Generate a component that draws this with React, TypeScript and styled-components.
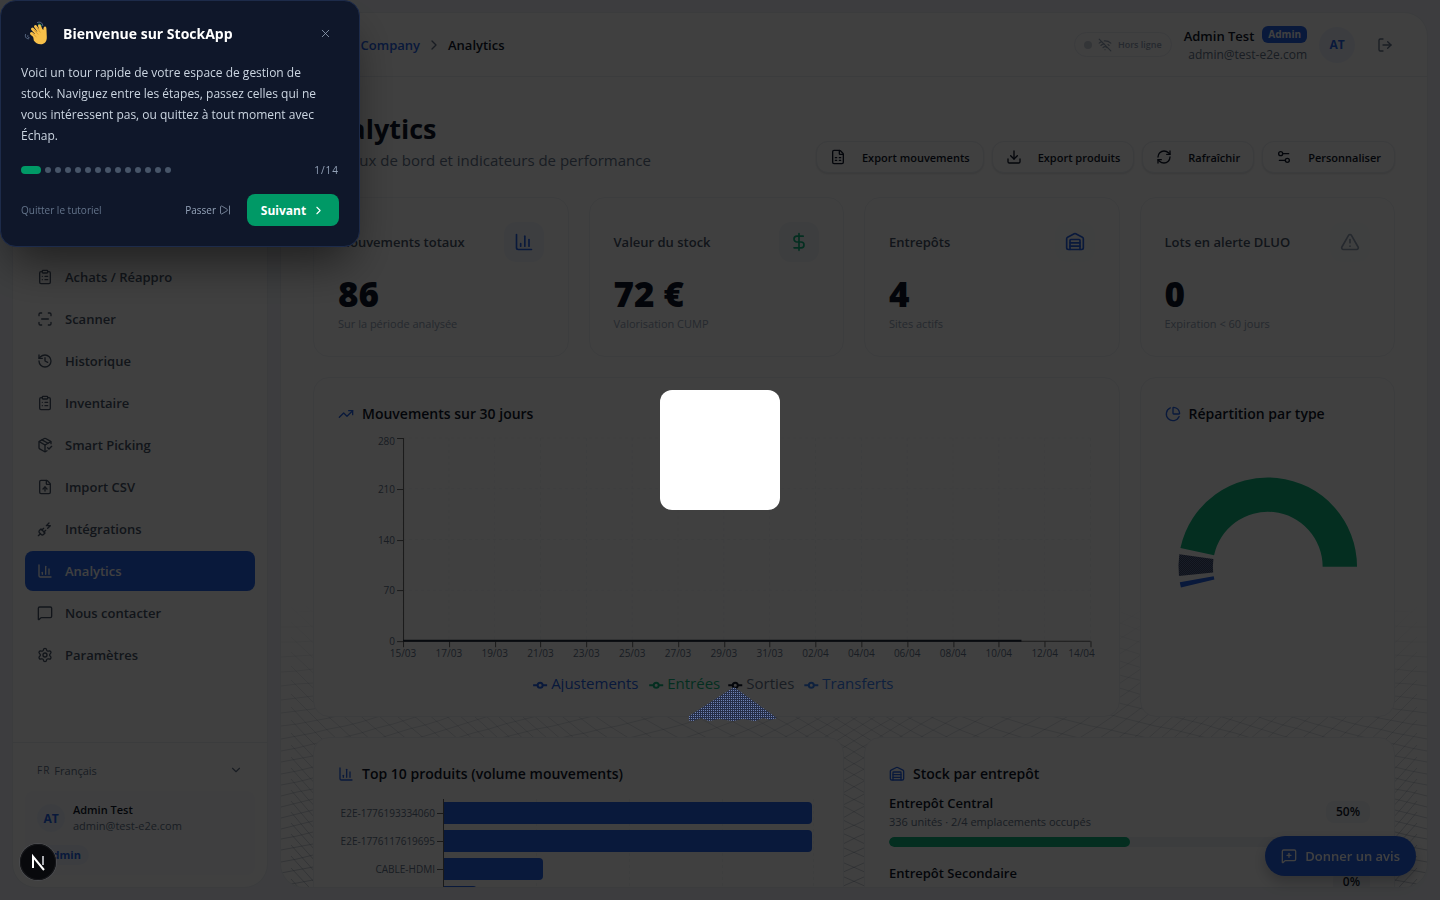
import React from "react";
import styled, { createGlobalStyle } from "styled-components";
import {
  ChartColumn, ChartPie, ChevronDown, ChevronRight, ClipboardList, DollarSign, Download,
  FileSpreadsheet, FileUp, History, LogOut, MessageSquare, MessageSquarePlus, PackageCheck,
  PlugZap, RefreshCw, ScanLine, Settings, Settings2, SkipForward, TrendingUp, TriangleAlert,
  Warehouse, WifiOff, X,
} from "lucide-react";

const color = {
  page: "#f1f4f9",
  surface: "#ffffff",
  line: "#e9edf3",
  ink: "#0f172a",
  body: "#475569",
  muted: "#64748b",
  faint: "#94a3b8",
  blue: "#2563eb",
  green: "#10b981",
};

const GlobalStyle = createGlobalStyle`
  *, *::before, *::after { box-sizing: border-box; }
  body {
    margin: 0;
    background: ${color.page};
    color: ${color.ink};
    font-family: "Segoe UI", "Open Sans", "Noto Sans", sans-serif;
    font-size: 13px;
  }
  button, select { font: inherit; color: inherit; }
  h1, h2, p, ul { margin: 0; padding: 0; }
`;

const Shell = styled.div`
  display: flex;
  gap: 12px;
  height: 100vh;
  padding: 12px;
`;

/* Sidebar */

const Sidebar = styled.aside`
  display: flex;
  flex-direction: column;
  flex: 0 0 256px;
  background: ${color.surface};
  border: 1px solid ${color.line};
  border-radius: 24px;
  overflow: hidden;
`;

const NavList = styled.ul`
  flex: 1;
  display: flex;
  flex-direction: column;
  justify-content: flex-end;
  gap: 2px;
  padding: 0 12px 67px;
  list-style: none;
`;

const NavLink = styled.a<{ $active?: boolean }>`
  display: flex;
  align-items: center;
  gap: 12px;
  height: 40px;
  padding: 0 12px;
  border-radius: 8px;
  font-weight: 600;
  text-decoration: none;
  color: ${(p) => (p.$active ? "#ffffff" : color.body)};
  background: ${(p) => (p.$active ? color.blue : "transparent")};
  svg { width: 16px; height: 16px; }
`;

const SidebarFooter = styled.div`
  padding: 6px 12px 12px;
  border-top: 1px solid ${color.line};
`;

const LanguagePicker = styled.label`
  display: flex;
  align-items: center;
  gap: 4px;
  height: 42px;
  padding: 0 12px;
  font-size: 12px;
  font-weight: 500;
  color: ${color.muted};
  select {
    flex: 1;
    appearance: none;
    border: 0;
    padding: 0;
    background: none;
    font-size: 11px;
  }
  svg { width: 14px; height: 14px; }
`;

const LanguageCode = styled.span`
  font-size: 10px;
  letter-spacing: 1px;
`;

const UserCard = styled.div`
  display: flex;
  flex-direction: column;
  gap: 11px;
  height: 84px;
  padding: 11px 12px;
  border-radius: 8px;
  background: #fbfcfe;
`;

const UserRow = styled.div`
  display: flex;
  align-items: center;
  gap: 8px;
`;

const Avatar = styled.span<{ $size: number }>`
  display: grid;
  place-items: center;
  width: ${(p) => p.$size}px;
  height: ${(p) => p.$size}px;
  border-radius: 50%;
  background: #eff4fd;
  color: ${color.blue};
  font-size: 12px;
  font-weight: 700;
`;

const UserText = styled.div<{ $end?: boolean }>`
  display: flex;
  flex-direction: column;
  align-items: ${(p) => (p.$end ? "flex-end" : "flex-start")};
  font-size: ${(p) => (p.$end ? 13 : 11)}px;
  line-height: ${(p) => (p.$end ? 20 : 16)}px;
  font-weight: 600;
  color: ${color.ink};
  small {
    font-size: ${(p) => (p.$end ? 12 : 11)}px;
    line-height: ${(p) => (p.$end ? 18 : 16)}px;
    font-weight: 400;
    color: ${color.muted};
  }
`;

const NameLine = styled.span`
  display: flex;
  align-items: center;
  gap: 8px;
`;

const RoleBadge = styled.span<{ $solid?: boolean }>`
  align-self: flex-start;
  padding: 0 ${(p) => (p.$solid ? 6 : 8)}px;
  border-radius: ${(p) => (p.$solid ? 6 : 10)}px;
  font-size: ${(p) => (p.$solid ? 10 : 11)}px;
  font-weight: 700;
  line-height: ${(p) => (p.$solid ? 17 : 20)}px;
  color: ${(p) => (p.$solid ? "#ffffff" : color.blue)};
  background: ${(p) => (p.$solid ? color.blue : "#eff4fd")};
`;

/* Main panel */

const Main = styled.main`
  position: relative;
  flex: 1;
  min-width: 0;
  display: flex;
  flex-direction: column;
  background: ${color.surface};
  border: 1px solid ${color.line};
  border-radius: 24px;
  overflow: hidden;
`;

const MeshLayer = styled.svg`
  position: absolute;
  left: 0;
  bottom: 0;
  width: 100%;
  height: 290px;
`;

const TopBar = styled.header`
  position: relative;
  display: flex;
  align-items: center;
  justify-content: space-between;
  flex: 0 0 64px;
  padding: 0 32px;
  border-bottom: 1px solid ${color.line};
`;

const Breadcrumb = styled.nav`
  display: flex;
  align-items: center;
  gap: 6px;
  font-weight: 600;
  a {
    width: 107px;
    text-align: right;
    white-space: nowrap;
    color: ${color.blue};
    text-decoration: none;
  }
  svg { width: 16px; height: 16px; color: ${color.muted}; }
`;

const TopActions = styled.div`
  display: flex;
  align-items: center;
  gap: 12px;
`;

const StatusPill = styled.span`
  display: flex;
  align-items: center;
  gap: 6px;
  height: 25px;
  padding: 0 9px;
  border: 1px solid ${color.line};
  border-radius: 13px;
  font-size: 9px;
  font-weight: 600;
  color: ${color.faint};
  svg { width: 14px; height: 14px; }
`;

const StatusDot = styled.i`
  width: 8px;
  height: 8px;
  border-radius: 50%;
  background: #cbd2dc;
`;

const IconButton = styled.button`
  display: grid;
  place-items: center;
  width: 36px;
  height: 36px;
  margin-right: -8px;
  padding: 0;
  border: 0;
  background: none;
  color: ${color.muted};
  svg { width: 16px; height: 16px; }
`;

const Content = styled.div`
  position: relative;
  flex: 1;
  min-height: 0;
  padding: 32px;
  overflow: hidden;
`;

const PageHead = styled.div`
  display: flex;
  align-items: flex-end;
  justify-content: space-between;
  margin-bottom: 24px;
`;

const PageTitle = styled.h1`
  font-size: 27px;
  line-height: 39px;
  font-weight: 700;
`;

const PageSubtitle = styled.p`
  font-size: 15px;
  line-height: 25px;
  color: ${color.muted};
`;

const Toolbar = styled.div`
  display: flex;
  gap: 8px;
`;

const ToolButton = styled.button`
  display: flex;
  align-items: center;
  gap: 16px;
  height: 32px;
  padding: 0 13px;
  border: 1px solid ${color.line};
  border-radius: 12px;
  background: ${color.surface};
  box-shadow: 0 1px 2px rgba(15, 23, 42, 0.12);
  font-size: 11px;
  font-weight: 600;
  white-space: nowrap;
  svg { width: 16px; height: 16px; }
`;

const Grid = styled.div`
  display: grid;
  grid-template-columns: repeat(4, minmax(0, 1fr));
  gap: 20px;
`;

const Card = styled.section<{ $span?: number; $height?: number }>`
  grid-column: span ${(p) => p.$span ?? 1};
  min-height: ${(p) => p.$height ?? 0}px;
  padding: 24px;
  border: 1px solid #eff2f6;
  border-radius: 16px;
  background: ${color.surface};
`;

const StatHead = styled.div`
  display: flex;
  align-items: center;
  justify-content: space-between;
  margin-bottom: 12px;
  font-weight: 600;
  color: ${color.body};
`;

const StatIcon = styled.span<{ $tint: string; $back: string }>`
  display: grid;
  place-items: center;
  width: 40px;
  height: 40px;
  border-radius: 12px;
  color: ${(p) => p.$tint};
  background: ${(p) => p.$back};
  svg { width: 20px; height: 20px; }
`;

const StatValue = styled.p`
  margin-bottom: 2px;
  font-size: 35px;
  line-height: 40px;
  font-weight: 800;
`;

const StatNote = styled.p`
  font-size: 11px;
  line-height: 16px;
  color: ${color.faint};
`;

const CardTitle = styled.h2`
  display: flex;
  align-items: center;
  gap: 8px;
  margin-bottom: 1px;
  font-size: 14px;
  line-height: 24px;
  font-weight: 600;
  svg { width: 16px; height: 16px; color: ${color.blue}; }
`;

const Chart = styled.svg`
  display: block;
  width: 100%;
  text { font-size: 10px; fill: ${color.muted}; }
  text.legend { font-size: 15px; }
`;

const StockList = styled.ul`
  display: grid;
  gap: 16px;
  margin-top: 7px;
  list-style: none;
`;

const StockRow = styled.div`
  display: flex;
  align-items: center;
  justify-content: space-between;
  margin-bottom: 6px;
  strong { display: block; line-height: 20px; font-weight: 600; }
  small { display: block; min-height: 18px; font-size: 11px; line-height: 18px; color: ${color.muted}; }
`;

const Percent = styled.span`
  padding: 0 10px;
  border-radius: 8px;
  background: #f3f5f9;
  font-size: 12px;
  font-weight: 600;
  line-height: 22px;
`;

const Track = styled.div`
  height: 10px;
  border-radius: 5px;
  background: #eef2f7;
  overflow: hidden;
`;

const Fill = styled.div`
  height: 100%;
  border-radius: 5px;
  background: ${color.green};
`;

const FeedbackButton = styled.button`
  position: fixed;
  right: 24px;
  bottom: 24px;
  display: flex;
  align-items: center;
  gap: 8px;
  height: 40px;
  padding: 0 16px;
  border: 0;
  border-radius: 20px;
  background: ${color.blue};
  color: #ffffff;
  font-weight: 600;
  box-shadow: 0 6px 14px rgba(15, 23, 42, 0.25);
  svg { width: 16px; height: 16px; }
`;

/* Tour */

const Spotlight = styled.div`
  position: fixed;
  top: 50%;
  left: 50%;
  width: 120px;
  height: 120px;
  margin: -60px 0 0 -60px;
  border-radius: 12px;
  background: #ffffff;
  box-shadow: 0 0 0 9999px rgba(0, 0, 0, 0.75);
`;

const PeakLayer = styled.svg`
  position: fixed;
  left: calc(50% - 31px);
  top: 686px;
  width: 90px;
  height: 36px;
`;

const TourCard = styled.div`
  position: fixed;
  top: 0;
  left: 0;
  width: 360px;
  padding: 20px;
  border: 1px solid #1d2b4a;
  border-radius: 16px;
  background: #0f172a;
  color: #cbd5e1;
  box-shadow: 0 24px 48px -10px rgba(0, 0, 0, 0.55);
`;

const TourHead = styled.div`
  display: flex;
  align-items: center;
  gap: 10px;
  height: 24px;
  margin-bottom: 17px;
  h2 { flex: 1; font-size: 14px; font-weight: 700; color: #ffffff; }
  > svg { width: 32px; height: 32px; }
`;

const CloseButton = styled.button`
  display: grid;
  place-items: center;
  width: 28px;
  height: 28px;
  padding: 0;
  border: 0;
  background: none;
  color: ${color.faint};
  svg { width: 13px; height: 13px; }
`;

const TourText = styled.p`
  padding-right: 12px;
  line-height: 21px;
  font-size: 12px;
  font-weight: 500;
`;

const Steps = styled.div`
  display: flex;
  align-items: center;
  gap: 4px;
  height: 16px;
  margin: 16px 0;
  font-size: 10px;
  color: ${color.faint};
  span { margin-left: auto; letter-spacing: 1px; }
`;

const Step = styled.i<{ $current?: boolean }>`
  width: ${(p) => (p.$current ? 20 : 6)}px;
  height: ${(p) => (p.$current ? 8 : 6)}px;
  border-radius: 4px;
  background: ${(p) => (p.$current ? "#009966" : "#475569")};
`;

const TourActions = styled.div`
  display: flex;
  align-items: center;
  gap: 16px;
`;

const TextButton = styled.button<{ $quiet?: boolean }>`
  display: flex;
  align-items: center;
  gap: 3px;
  padding: 0;
  border: 0;
  background: none;
  font-size: 10px;
  color: ${(p) => (p.$quiet ? color.muted : color.faint)};
  margin-right: ${(p) => (p.$quiet ? "auto" : "0")};
  svg { width: 12px; height: 12px; }
`;

const NextButton = styled.button`
  display: flex;
  align-items: center;
  justify-content: center;
  gap: 6px;
  width: 92px;
  height: 32px;
  padding: 0;
  border: 0;
  border-radius: 8px;
  background: #009966;
  color: #ffffff;
  font-size: 12px;
  font-weight: 700;
  svg { width: 13px; height: 13px; }
`;

const DevBadge = styled.button`
  position: fixed;
  left: 20px;
  bottom: 20px;
  width: 36px;
  height: 36px;
  padding: 0;
  border: 0;
  border-radius: 50%;
  background: #08090c;
  box-shadow: 0 0 0 1px #4a4b4e, inset 0 0 0 1px #16171a;
  svg { display: block; width: 36px; height: 36px; }
`;

const navItems = [
  { label: "Achats / Réappro", icon: ClipboardList },
  { label: "Scanner", icon: ScanLine },
  { label: "Historique", icon: History },
  { label: "Inventaire", icon: ClipboardList },
  { label: "Smart Picking", icon: PackageCheck },
  { label: "Import CSV", icon: FileUp },
  { label: "Intégrations", icon: PlugZap },
  { label: "Analytics", icon: ChartColumn, active: true },
  { label: "Nous contacter", icon: MessageSquare },
  { label: "Paramètres", icon: Settings },
];

const tools = [
  { label: "Export mouvements", icon: FileSpreadsheet },
  { label: "Export produits", icon: Download },
  { label: "Rafraîchir", icon: RefreshCw },
  { label: "Personnaliser", icon: Settings2 },
];

const stats = [
  { label: "Mouvements totaux", value: "86", note: "Sur la période analysée", icon: ChartColumn, tint: color.blue, back: "#f3f7fe" },
  { label: "Valeur du stock", value: "72 €", note: "Valorisation CUMP", icon: DollarSign, tint: color.green, back: "#f1f6f9" },
  { label: "Entrepôts", value: "4", note: "Sites actifs", icon: Warehouse, tint: color.blue, back: "#fcfdfe" },
  { label: "Lots en alerte DLUO", value: "0", note: "Expiration < 60 jours", icon: TriangleAlert, tint: color.faint, back: "#fcfdfe" },
];

const days = ["15/03", "17/03", "19/03", "21/03", "23/03", "25/03", "27/03", "29/03", "31/03", "02/04", "04/04", "06/04", "08/04", "10/04", "12/04", "14/04"];
const levels = [280, 210, 140, 70, 0];
const series = [
  { label: "Ajustements", x: 195, tint: "#2563eb", text: "#2563eb" },
  { label: "Entrées", x: 311, tint: "#10b981", text: "#10b981" },
  { label: "Sorties", x: 390, tint: "#0f172a", text: "#64748b" },
  { label: "Transferts", x: 466, tint: "#3b82f6", text: "#3b82f6" },
];
const products = [
  { label: "E2E-1776193334060", width: 369 },
  { label: "E2E-1776117619695", width: 369 },
  { label: "CABLE-HDMI", width: 100 },
  { label: "", width: 34 },
];
const warehouses = [
  { label: "Entrepôt Central", note: "336 unités · 2/4 emplacements occupés", percent: 50 },
  { label: "Entrepôt Secondaire", note: "", percent: 0 },
];

/* Two mirrored families of curves that cross into a net behind the cards. */
function Mesh() {
  const width = 1146;
  const start = 0.12;
  const bend = 0.7 / width;
  const rise = (x: number) => (Math.log(Math.cos(start)) - Math.log(Math.cos(start + bend * x))) / bend;
  const lines: string[] = [];
  for (let y0 = 0; y0 < 960; y0 += 13) {
    let left = "";
    let right = "";
    for (let x = 0; x <= width; x += 16) {
      const wave = 12 * Math.sin(x / 110 + y0 / 70);
      const y = Math.round(y0 - rise(x) + wave);
      if (y < -20 || y > 310) continue;
      left += `${left ? "L" : "M"}${x} ${y}`;
      right += `${right ? "L" : "M"}${width - x} ${y}`;
    }
    if (left) lines.push(left, right);
  }
  return (
    <MeshLayer viewBox={`0 0 ${width} 290`} preserveAspectRatio="none" aria-hidden="true">
      <defs>
        <linearGradient id="meshFade" gradientUnits="userSpaceOnUse" x1="0" y1="0" x2="0" y2="290">
          <stop offset="0" stopColor="#64748b" stopOpacity="0" />
          <stop offset="0.3" stopColor="#64748b" stopOpacity="0.16" />
          <stop offset="1" stopColor="#64748b" stopOpacity="0.36" />
        </linearGradient>
      </defs>
      <g fill="none" stroke="url(#meshFade)">
        {lines.map((d, i) => <path key={i} d={d} />)}
      </g>
    </MeshLayer>
  );
}

function MovementChart() {
  const step = 45.8;
  return (
    <Chart viewBox="0 0 756 265" role="img" aria-label="Mouvements sur 30 jours">
      <g stroke="#f3f5f8" strokeDasharray="3 3">
        {levels.map((v, i) => <path key={v} d={`M65 ${11 + i * 50.75}H752`} />)}
        {days.map((d, i) => <path key={d} d={`M${65 + i * step} 11V214`} />)}
      </g>
      <g stroke="#666666" fill="none">
        <path d="M65.5 11V214M65 214H752" />
        {levels.map((v, i) => <path key={v} d={`M59 ${Math.round(11 + i * 50.75) + 0.5}h6`} />)}
        {days.map((d, i) => <path key={d} d={`M${Math.round(65 + i * step) + 0.5} 214v6`} />)}
      </g>
      <path d="M65 213.5H683" stroke="#1e293b" strokeWidth="2" />
      {levels.map((v, i) => (
        <text key={v} x="57" y={i === 0 ? 18 : 15 + i * 50.75} textAnchor="end">{v}</text>
      ))}
      {days.map((d, i) => (
        <text key={d} x={i === 15 ? 743 : 65 + i * step} y="230" textAnchor="middle">{d}</text>
      ))}
      {series.map((s) => (
        <g key={s.label}>
          <path d={`M${s.x} 258h4.500M${s.x + 9.5} 258h4.500`} stroke={s.tint} strokeWidth="2" />
          <circle cx={s.x + 7} cy="258" r="2.500" fill="none" stroke={s.tint} strokeWidth="2" />
          <text className="legend" x={s.x + 18} y="262" style={{ fill: s.text }}>{s.label}</text>
        </g>
      ))}
    </Chart>
  );
}

function arc(from: number, to: number) {
  const at = (deg: number, r: number) => {
    const a = (deg * Math.PI) / 180;
    return `${(103 + r * Math.cos(a)).toFixed(2)} ${(140 - r * Math.sin(a)).toFixed(2)}`;
  };
  return `M${at(from, 89.5)}A89.5 89.5 0 0 0 ${at(to, 89.5)}L${at(to, 55)}A55 55 0 0 1 ${at(from, 55)}Z`;
}

function TypeChart() {
  return (
    <Chart viewBox="0 0 206 265" role="img" aria-label="Répartition par type">
      <defs>
        <pattern id="weave" width="2" height="2" patternUnits="userSpaceOnUse">
          <rect width="2" height="2" fill="#0f172a" />
          <path d="M0 0h1v1H0zM1 1h1v1H1z" fill="#8ea2d8" />
        </pattern>
      </defs>
      <path d={arc(0, 168)} fill={color.green} />
      <path d={arc(172, 186)} fill="url(#weave)" />
      <path d={arc(190, 193.500)} fill={color.blue} />
    </Chart>
  );
}

function ProductChart() {
  return (
    <Chart viewBox="0 1 481 290" role="img" aria-label="Top 10 produits">
      <g stroke="#f3f5f8" strokeDasharray="3 3">
        {[198, 291, 384, 475].map((x) => <path key={x} d={`M${x}.5 13V290`} />)}
      </g>
      <path d="M105.5 13V290" stroke="#666666" />
      {products.map((p, i) => (
        <g key={i}>
          <path d={`M99 ${27.5 + i * 28}h6`} stroke="#666666" />
          <path
            d={`M106 ${16 + i * 28}h${p.width - 5}q4 0 4 4v14q0 4-4 4h-${p.width - 5}z`}
            fill={color.blue}
          />
          <text x="97" y={31 + i * 28} textAnchor="end">{p.label}</text>
        </g>
      ))}
    </Chart>
  );
}

function WavingHand() {
  return (
    <svg viewBox="0 0 32 32" aria-hidden="true">
      <g fill="none" strokeLinecap="round">
        <path d="M4.500 17.500c-.8 2.200.5 4.300 3 4.300M6.800 18.600c-.4 1 .1 2 1.300 2.100" stroke="#5b6b85" />
        <path d="M16.500 5.500c2.600-1.200 5 .2 5.300 3" stroke="#5b6b85" />
        <path d="M17.500 7.200c1.400-.4 2.500.3 2.800 1.600" stroke="#14a37a" />
      </g>
      <g stroke="#f7c04a" strokeLinecap="round" strokeWidth="3">
        <path d="M17 18L11.500 12M19 16L14.500 9.500M21 15L18.500 9M16 21L10.500 16.500" />
      </g>
      <path
        d="M12 18.500L20 11.500l2.300 1.500c.1-1.800.5-3.500 1.700-3.500 1.400 0 1.500 1.600 1.500 3.500l.3 7c.2 5-2.600 7.300-6 7.300-3.300 0-5.500-1.500-7-3.800z"
        fill="#f7c04a"
      />
      <path d="M12.800 12.700l4.500 4.800M15.700 10.500l3.600 4.900M11.800 16.800l3.600 3.100" stroke="#d9952b" strokeWidth=".8" fill="none" />
    </svg>
  );
}

function Tour() {
  return (
    <TourCard role="dialog" aria-label="Bienvenue sur StockApp">
      <TourHead>
        <WavingHand />
        <h2>Bienvenue sur StockApp</h2>
        <CloseButton aria-label="Fermer"><X strokeWidth={1.5} /></CloseButton>
      </TourHead>
      <TourText>
        Voici un tour rapide de votre espace de gestion de stock. Naviguez entre les étapes,
        passez celles qui ne vous intéressent pas, ou quittez à tout moment avec Échap.
      </TourText>
      <Steps>
        {Array.from({ length: 14 }, (_, i) => <Step key={i} $current={i === 0} />)}
        <span>1/14</span>
      </Steps>
      <TourActions>
        <TextButton $quiet>Quitter le tutoriel</TextButton>
        <TextButton>Passer <SkipForward strokeWidth={1.5} /></TextButton>
        <NextButton>Suivant <ChevronRight /></NextButton>
      </TourActions>
    </TourCard>
  );
}

export default function App() {
  return (
    <>
      <GlobalStyle />
      <Shell>
        <Sidebar>
          <NavList>
            {navItems.map(({ label, icon: Icon, active }) => (
              <li key={label}>
                <NavLink href="#" $active={active}><Icon />{label}</NavLink>
              </li>
            ))}
          </NavList>
          <SidebarFooter>
            <LanguagePicker>
              <LanguageCode>FR</LanguageCode>
              <select aria-label="Langue"><option>Français</option></select>
              <ChevronDown />
            </LanguagePicker>
            <UserCard>
              <UserRow>
                <Avatar $size={28}>AT</Avatar>
                <UserText>Admin Test<small>admin@test-e2e.com</small></UserText>
              </UserRow>
              <RoleBadge>Admin</RoleBadge>
            </UserCard>
          </SidebarFooter>
        </Sidebar>

        <Main>
          <Mesh />
          <TopBar>
            <Breadcrumb aria-label="Fil d'Ariane">
              <a href="#">Test Company</a>
              <ChevronRight />
              <span>Analytics</span>
            </Breadcrumb>
            <TopActions>
              <StatusPill><StatusDot /><WifiOff />Hors ligne</StatusPill>
              <UserText $end>
                <NameLine>Admin Test <RoleBadge $solid>Admin</RoleBadge></NameLine>
                <small>admin@test-e2e.com</small>
              </UserText>
              <Avatar $size={36}>AT</Avatar>
              <IconButton aria-label="Déconnexion"><LogOut /></IconButton>
            </TopActions>
          </TopBar>

          <Content>
            <PageHead>
              <div>
                <PageTitle>Analytics</PageTitle>
                <PageSubtitle>Tableaux de bord et indicateurs de performance</PageSubtitle>
              </div>
              <Toolbar>
                {tools.map(({ label, icon: Icon }) => (
                  <ToolButton key={label}><Icon />{label}</ToolButton>
                ))}
              </Toolbar>
            </PageHead>

            <Grid>
              {stats.map(({ label, value, note, icon: Icon, tint, back }) => (
                <Card key={label} $height={160}>
                  <StatHead>
                    {label}
                    <StatIcon $tint={tint} $back={back}><Icon /></StatIcon>
                  </StatHead>
                  <StatValue>{value}</StatValue>
                  <StatNote>{note}</StatNote>
                </Card>
              ))}
              <Card $span={3}>
                <CardTitle><TrendingUp />Mouvements sur 30 jours</CardTitle>
                <MovementChart />
              </Card>
              <Card>
                <CardTitle><ChartPie />Répartition par type</CardTitle>
                <TypeChart />
              </Card>
              <Card $span={2}>
                <CardTitle><ChartColumn />Top 10 produits (volume mouvements)</CardTitle>
                <ProductChart />
              </Card>
              <Card $span={2}>
                <CardTitle><Warehouse />Stock par entrepôt</CardTitle>
                <StockList>
                  {warehouses.map((w) => (
                    <li key={w.label}>
                      <StockRow>
                        <div><strong>{w.label}</strong><small>{w.note}</small></div>
                        <Percent>{w.percent}%</Percent>
                      </StockRow>
                      <Track><Fill style={{ width: `${w.percent}%` }} /></Track>
                    </li>
                  ))}
                </StockList>
              </Card>
            </Grid>
          </Content>
        </Main>
      </Shell>

      <FeedbackButton><MessageSquarePlus />Donner un avis</FeedbackButton>
      <Spotlight />
      <PeakLayer viewBox="0 0 90 36" aria-hidden="true">
        <defs>
          <pattern id="grain" width="2" height="2" patternUnits="userSpaceOnUse">
            <rect width="2" height="2" fill="#252e48" />
            <rect width="1" height="1" fill="#6f82b4" />
          </pattern>
        </defs>
        <path d="M45 1L88 32l-6 2-8-2-8 3-12-2-10 2-14-2-10 2-8-3-8 3-10-1z" fill="url(#grain)" />
      </PeakLayer>
      <Tour />
      <DevBadge aria-label="Outils de développement">
        <svg viewBox="0 0 36 36">
          <path d="M13 24V12.500L24 26" fill="none" stroke="#ffffff" strokeWidth="2" />
          <path d="M23 12v9" stroke="#a9abb0" strokeWidth="2" />
        </svg>
      </DevBadge>
    </>
  );
}
